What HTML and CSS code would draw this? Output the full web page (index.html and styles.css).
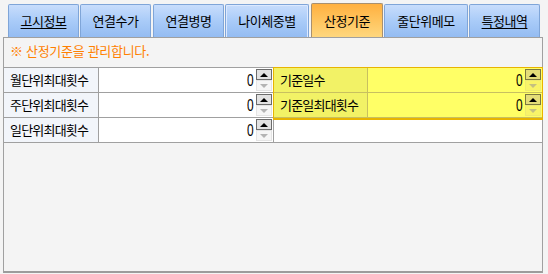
FILE: index.html
```html
<!DOCTYPE html>
<html lang="ko">
<head>
    <meta charset="UTF-8">
    <meta name="viewport" content="width=device-width, initial-scale=1.0">
    <title>산정기준</title>
    <link rel="stylesheet" href="styles.css">
</head>
<body>
    <div class="window">
        <div class="tabs">
            <div class="tab link">고시정보</div>
            <div class="tab">연결수가</div>
            <div class="tab gap">연결병명</div>
            <div class="tab focus wide">나이체중별</div>
            <div class="tab active gap">산정기준</div>
            <div class="tab wide">줄단위메모</div>
            <div class="tab link">특정내역</div>
        </div>

        <div class="panel">
            <div class="notice">※ 산정기준을 관리합니다.</div>

            <div class="grid">
                <div class="field">
                    <div class="label">월단위최대횟수</div>
                    <div class="input">
                        <span class="value">0</span>
                        <div class="spin"><span class="up"></span><span class="down"></span></div>
                    </div>
                </div>

                <div class="highlight">
                    <div class="field">
                        <div class="label">기준일수</div>
                        <div class="input">
                            <span class="value">0</span>
                            <div class="spin"><span class="up"></span><span class="down"></span></div>
                        </div>
                    </div>
                    <div class="field">
                        <div class="label">기준일최대횟수</div>
                        <div class="input">
                            <span class="value">0</span>
                            <div class="spin"><span class="up"></span><span class="down"></span></div>
                        </div>
                    </div>
                </div>

                <div class="field">
                    <div class="label">주단위최대횟수</div>
                    <div class="input">
                        <span class="value">0</span>
                        <div class="spin"><span class="up"></span><span class="down"></span></div>
                    </div>
                </div>

                <div class="field">
                    <div class="label">일단위최대횟수</div>
                    <div class="input">
                        <span class="value">0</span>
                        <div class="spin"><span class="up"></span><span class="down"></span></div>
                    </div>
                </div>
                <div class="empty"></div>
            </div>
        </div>
    </div>
</body>
</html>
```

FILE: styles.css
```css
body {
    margin: 0;
    padding: 0;
    background: #f4f4f4;
    font-family: "Noto Sans CJK KR", "Noto Sans", sans-serif;
    font-size: 13px;
    color: #000;
}

.window {
    padding-top: 3px;
}

/* tabs */
.tabs {
    display: flex;
    align-items: flex-end;
    height: 34px;
    margin-left: 8px;
}

.tab {
    box-sizing: border-box;
    width: 71px;
    height: 33px;
    border: 1px solid #7fa5d8;
    border-bottom: none;
    border-radius: 2px 2px 0 0;
    background: linear-gradient(to bottom, #c8ddfc 0%, #a9cbf8 50%, #94bcf2 100%);
    display: flex;
    align-items: center;
    justify-content: center;
    letter-spacing: -0.5px;
    padding-bottom: 1px;
}

.tab + .tab {
    margin-left: 1px;
}

.tab.gap {
    margin-left: 2px;
}

.tab.wide {
    width: 84px;
}

.tab.link {
    text-decoration: underline;
    text-underline-offset: 2px;
}

.tab.focus {
    box-shadow: inset 1px 1px 0 #dce9ff, inset -1px 0 0 #dce9ff;
}

.tab.active {
    height: 34px;
    width: 72px;
    border-color: #a89070;
    background: linear-gradient(to bottom, #ffb040 0%, #ffc45e 50%, #ffd77e 100%);
}

/* panel */
.panel {
    box-sizing: border-box;
    width: 540px;
    height: 236px;
    margin-left: 3px;
    border: 1px solid #a0a0a0;
    border-bottom: 2px solid #9c9c9c;
    background: #f4f4f4;
}

.notice {
    height: 29px;
    line-height: 26px;
    padding-left: 6px;
    color: #ff8000;
    font-size: 13px;
    letter-spacing: -0.3px;
}

.grid {
    display: grid;
    grid-template-columns: 270px 268px;
    grid-template-rows: 25px 25px 25px;
    border-top: 1px solid #a0a0a0;
}

.field {
    display: flex;
    height: 25px;
    box-sizing: border-box;
    border-bottom: 1px solid #a0a0a0;
}

.grid > .field {
    border-right: 1px solid #a0a0a0;
}

.label {
    box-sizing: border-box;
    width: 95px;
    border-right: 1px solid #a0a0a0;
    background: #f2f5fa;
    padding-left: 6px;
    line-height: 23px;
    letter-spacing: -0.8px;
}

.input {
    flex: 1;
    display: flex;
    justify-content: flex-end;
    align-items: flex-start;
    background: #fff;
    padding: 1px 1px 0 0;
}

.value {
    display: inline-block;
    font-family: "Liberation Sans", sans-serif;
    font-size: 17px;
    line-height: 23px;
    transform: scaleX(0.7);
    transform-origin: right center;
    padding-right: 4px;
}

.spin {
    display: flex;
    flex-direction: column;
    width: 16px;
}

.spin span {
    box-sizing: border-box;
    height: 11px;
    display: flex;
    align-items: center;
    justify-content: center;
}

.spin span::after {
    content: "";
    width: 0;
    height: 0;
    border-left: 4px solid transparent;
    border-right: 4px solid transparent;
}

.spin .up {
    background: #e2e2e2;
    border: 1px solid #6c6c6c;
}

.spin .up::after {
    border-bottom: 4px solid #000;
}

.spin .down {
    background: #f6f6f6;
    border: 1px solid #e4e4e4;
}

.spin .down::after {
    border-top: 4px solid #b4b4b4;
}

/* highlighted block */
.highlight {
    grid-row: span 2;
    box-shadow: 0 0 0 1px #e8b400, 0 1px 0 1px #e8b400;
    z-index: 1;
}

.highlight .field {
    border-bottom-color: #c8c060;
}

.highlight .label {
    width: 94px;
    background: #f2f266;
    border-right-color: #c8c060;
}

.highlight .input {
    background: #ffff66;
}

.highlight .spin .up {
    background: #e4dd78;
    border-color: #7c7840;
}

.highlight .spin .down {
    background: #f8f468;
    border-color: #eeea70;
}

.highlight .spin .down::after {
    border-top-color: #c4c080;
}

.empty {
    background: #fff;
    border-bottom: 1px solid #a0a0a0;
}
```
